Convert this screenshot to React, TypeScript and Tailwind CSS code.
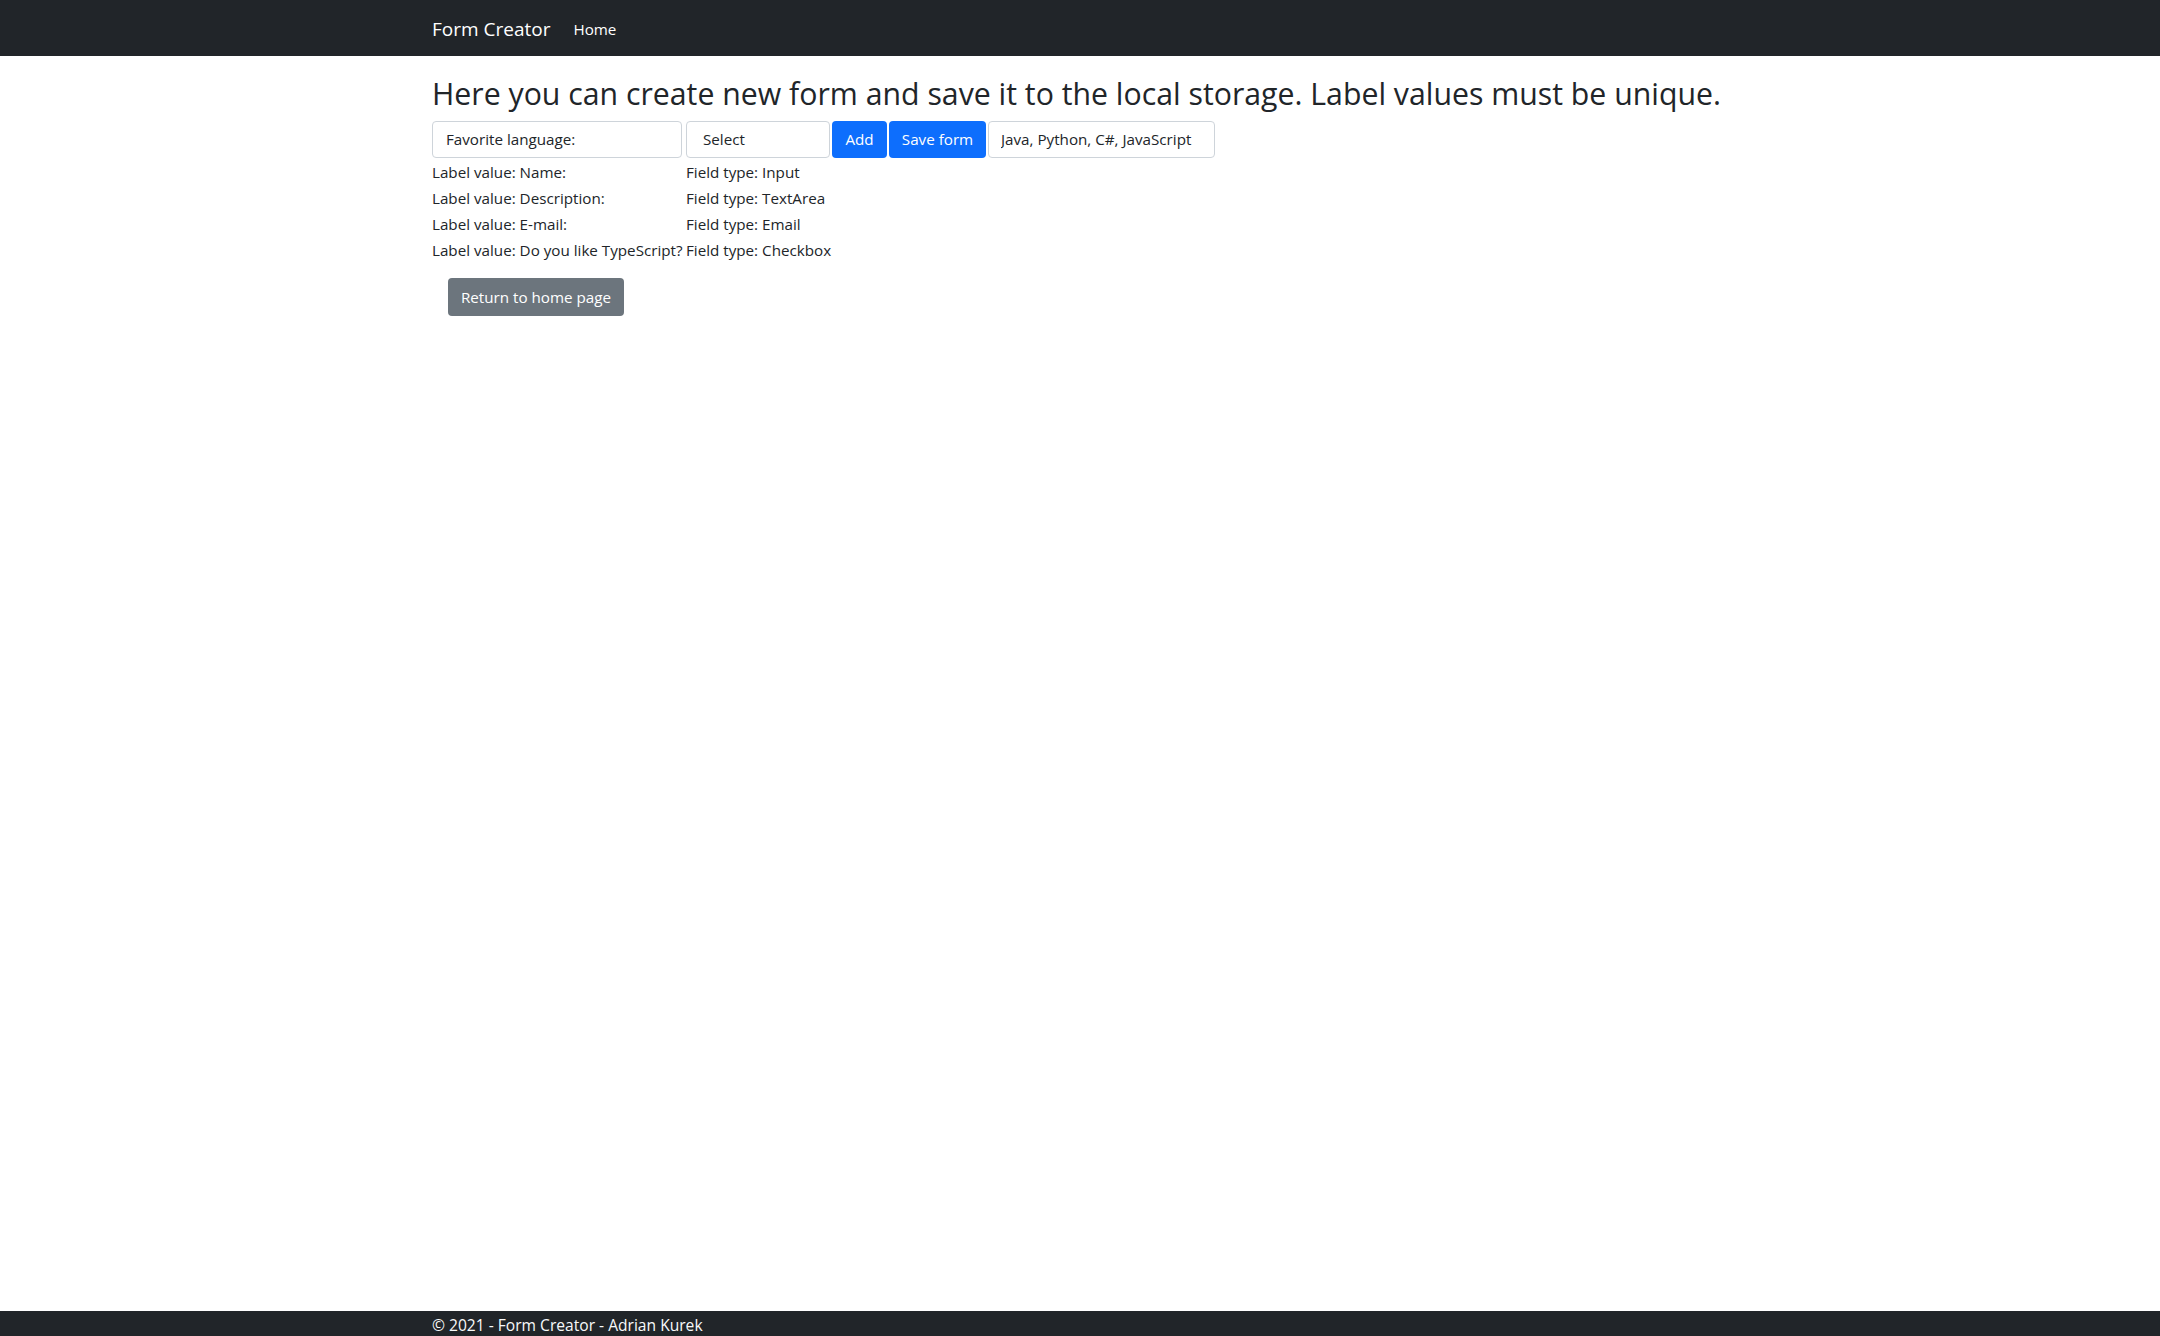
import React from "react";

const fields = [
  { label: "Name:", type: "Input" },
  { label: "Description:", type: "TextArea" },
  { label: "E-mail:", type: "Email" },
  { label: "Do you like TypeScript?", type: "Checkbox" },
];

export default function App() {
  return (
    <div
      className="flex h-screen flex-col bg-white text-[15.2px] text-[#212529]"
      style={{ fontFamily: '"Open Sans", "Noto Sans", sans-serif' }}
    >
      {/* navbar */}
      <nav className="h-[56px] shrink-0 bg-[#212529]">
        <div className="mx-auto flex h-full w-[1320px] items-center px-[12px] pt-[2px]">
          <span className="mr-[23px] text-[19px] leading-[28px] text-white">Form Creator</span>
          <span className="text-[15.2px] text-white">Home</span>
        </div>
      </nav>

      <main className="flex-1">
        <div className="mx-auto w-[1320px] px-[12px]">
          <h2 className="mt-[19px] mb-[8px] text-[30.25px] font-normal leading-[38px]">
            Here you can create new form and save it to the local storage. Label values must be unique.
          </h2>

          <div className="flex h-[37px] items-stretch">
            <input
              readOnly
              value="Favorite language:"
              className="w-[250px] rounded-[4px] border border-[#ced4da] px-[13px] text-[15.2px] text-[#212529] outline-none"
            />
            <div className="ml-[4px] flex w-[144px] items-center rounded-[4px] border border-[#ced4da] px-[16px]">
              Select
            </div>
            <button className="ml-[2px] w-[55px] rounded-[4px] bg-[#0d6efd] text-white">Add</button>
            <button className="ml-[2px] w-[97px] rounded-[4px] bg-[#0d6efd] text-white">Save form</button>
            <input
              readOnly
              value="Java, Python, C#, JavaScript"
              className="ml-[2px] w-[227px] rounded-[4px] border border-[#ced4da] px-[12px] text-[15.2px] text-[#212529] outline-none"
            />
          </div>

          <div className="mt-[1px] grid grid-cols-[254px_auto] justify-start leading-[26px]">
            {fields.map((f) => (
              <React.Fragment key={f.label}>
                <span className="whitespace-nowrap">Label value: {f.label}</span>
                <span className="whitespace-nowrap">Field type: {f.type}</span>
              </React.Fragment>
            ))}
          </div>

          <button className="mt-[15px] ml-[16px] h-[38px] w-[176px] rounded-[4px] bg-[#6c757d] text-white">
            Return to home page
          </button>
        </div>
      </main>

      {/* footer */}
      <footer className="h-[25px] shrink-0 overflow-hidden bg-[#212529]">
        <div className="mx-auto w-[1320px] px-[12px] pt-[2px] text-[15.6px] leading-[24px] text-[#f8f9fa]">
          © 2021 - Form Creator - Adrian Kurek
        </div>
      </footer>
    </div>
  );
}
